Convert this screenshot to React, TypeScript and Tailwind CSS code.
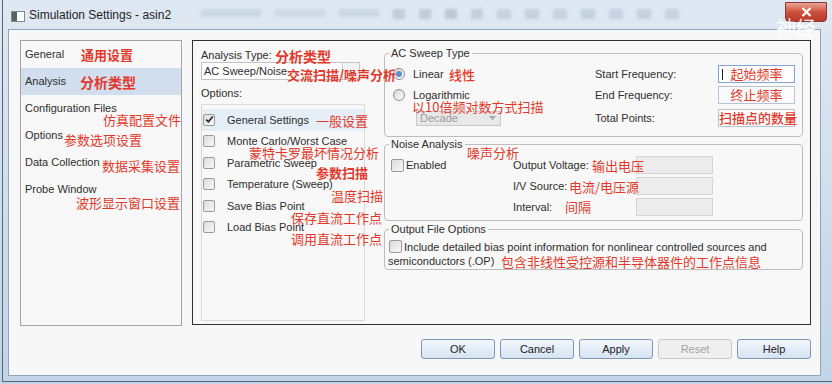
import React from "react";

const CN = "font-['Noto_Sans_CJK_SC',sans-serif] text-[#e2382b] leading-[18px] whitespace-nowrap absolute";

function Check({ checked = false, size = "w-[12px] h-[12px]" }: { checked?: boolean; size?: string }) {
  return (
    <span
      className={`${size} inline-flex shrink-0 items-center justify-center rounded-[2px] border border-[#9a9a9a] bg-gradient-to-br from-[#dcdcdc] to-[#f8f8f8] align-middle`}
    >
      {checked && (
        <svg width="9" height="9" viewBox="0 0 9 9">
          <path d="M1.2 4.6 L3.4 6.8 L7.8 1.6" fill="none" stroke="#222" strokeWidth="1.6" />
        </svg>
      )}
    </span>
  );
}

function Radio({ checked = false }: { checked?: boolean }) {
  return (
    <span className="w-[12px] h-[12px] shrink-0 rounded-full border border-[#8d8d8d] bg-gradient-to-br from-[#d8d8d8] to-[#fbfbfb] flex items-center justify-center">
      {checked && <span className="w-[6px] h-[6px] rounded-full bg-[#5b8fd0]" />}
    </span>
  );
}

function Btn({ label, disabled = false }: { label: string; disabled?: boolean }) {
  return (
    <div
      className={
        disabled
          ? "w-[74px] h-[20px] rounded-[3px] border border-[#c9c9c9] bg-[#efefef] text-[#a3a3a3] flex items-center justify-center"
          : "w-[74px] h-[20px] rounded-[3px] border border-[#7d97b5] bg-gradient-to-b from-[#f3f7fc] to-[#d5e3f2] text-[#222] flex items-center justify-center"
      }
    >
      {label}
    </div>
  );
}

export default function App() {
  const nav = ["General", "Analysis", "Configuration Files", "Options", "Data Collection", "Probe Window"];
  const opts = [
    "General Settings",
    "Monte Carlo/Worst Case",
    "Parametric Sweep",
    "Temperature (Sweep)",
    "Save Bias Point",
    "Load Bias Point",
  ];
  return (
    <div className="w-[832px] h-[384px] relative overflow-hidden bg-gradient-to-b from-[#dfe8f2] to-[#c2d4e7] font-['Liberation_Sans',Arial,sans-serif] text-[11px] text-[#2e2e2e]">
      <div className="ml-[2px] h-[382px] border-l border-b border-[#56677a] flex flex-col">
        {/* title bar */}
        <div className="h-[29px] flex items-start">
          <div className="mt-[11px] ml-[8px] w-[14px] h-[11px] border border-[#7a8a96] bg-white flex">
            <div className="w-[5px] h-full bg-[#4e6a5e]" />
          </div>
          <div className="mt-[7px] ml-[4px] text-[12px] text-[#1e1e1e] leading-[16px]">Simulation Settings - asin2</div>
          <div className="ml-[30px] mt-[9px] flex gap-[14px] opacity-30 blur-[1.5px]">
            <div className="w-[60px] h-[8px] bg-[#9fb2c6]" />
            <div className="w-[50px] h-[8px] bg-[#aab9c9]" />
            <div className="w-[40px] h-[8px] bg-[#a0b1c4]" />
            <div className="w-[12px] h-[10px] bg-[#7e8fa3]" />
            <div className="w-[12px] h-[10px] bg-[#7e8fa3]" />
            <div className="w-[12px] h-[10px] bg-[#6f8196]" />
            <div className="w-[12px] h-[10px] bg-[#8798ab]" />
            <div className="w-[14px] h-[10px] bg-[#8da0b5]" />
            <div className="w-[14px] h-[10px] bg-[#8da0b5]" />
            <div className="w-[14px] h-[10px] bg-[#93a6bb]" />
            <div className="w-[14px] h-[10px] bg-[#8da0b5]" />
            <div className="w-[14px] h-[10px] bg-[#93a6bb]" />
            <div className="w-[14px] h-[10px] bg-[#8da0b5]" />
            <div className="w-[14px] h-[10px] bg-[#93a6bb]" />
          </div>
          <div className="ml-auto mr-[5px] mt-[2px] w-[42px] h-[20px] rounded-b-[4px] border border-[#8a3a30] bg-gradient-to-b from-[#e9a596] via-[#cf4f3c] to-[#b73a28] flex items-center justify-center">
            <svg width="11" height="10" viewBox="0 0 11 10">
              <path d="M1.5 1 L9.5 9 M9.5 1 L1.5 9" stroke="#fff" strokeWidth="2.2" />
            </svg>
          </div>
        </div>

        {/* body */}
        <div className="ml-[5px] w-[813px] h-[347px] border border-[#8fa5bc] bg-[#f7f7f7] flex flex-col">
          <div className="flex items-start pt-[10px] pl-[11px] gap-[10px]">
            {/* left nav */}
            <div className="w-[162px] h-[286px] border border-[#a3a3a3] bg-[#f8f8f8] flex flex-col">
              {nav.map((n) => (
                <div
                  key={n}
                  className={`h-[27px] pl-[4px] flex items-center ${n === "Analysis" ? "bg-[#d1deed]" : ""}`}
                >
                  {n}
                </div>
              ))}
            </div>

            {/* right panel */}
            <div className="w-[619px] h-[285px] border border-[#333] bg-[#f8f8f8] flex items-start pl-[8px] pt-[5px] gap-[19px]">
              {/* left column */}
              <div className="w-[164px] pt-[2px] flex flex-col">
                <div className="h-[14px] leading-[14px]">Analysis Type:</div>
                <div className="w-[159px] h-[18px] border border-[#c4c4c4] bg-white flex">
                  <div className="flex-1 pl-[2px] flex items-center">AC Sweep/Noise</div>
                  <div className="w-[17px] border-l border-[#d0d0d0] bg-[#f2f2f2]" />
                </div>
                <div className="mt-[6px] h-[14px] leading-[14px]">Options:</div>
                <div className="mt-[4px] w-[164px] h-[217px] border border-[#d9d9d9] pt-[4px] flex flex-col">
                  {opts.map((o, i) => (
                    <div
                      key={o}
                      className={`h-[21.5px] flex items-center pl-[1px] gap-[12px] ${i === 0 ? "bg-[#e6eef8]" : ""}`}
                    >
                      <Check checked={i === 0} />
                      <span>{o}</span>
                    </div>
                  ))}
                </div>
              </div>

              {/* right column */}
              <div className="w-[419px] flex flex-col">
                {/* AC Sweep */}
                <fieldset className="border border-[#bdbdbd] rounded-[4px] pb-[9px]">
                  <legend className="ml-[4px] px-[2px] text-[11px] leading-[14px]">AC Sweep Type</legend>
                  <div className="mt-[5px] flex flex-col">
                    <div className="h-[18px] flex items-center">
                      <div className="w-[210px] pl-[8px] flex items-center">
                        <Radio checked />
                        <span className="ml-[8px]">Linear</span>
                      </div>
                      <div className="w-[123px]">Start Frequency:</div>
                      <div className="w-[77px] h-[18px] border border-[#7fa6d6] bg-white relative flex items-center justify-center">
                        <span className="absolute left-[3px] top-[3px] w-px h-[11px] bg-[#222]" />
                        <span className="font-['Noto_Sans_CJK_SC',sans-serif] text-[13px] text-[#e2382b] whitespace-nowrap leading-[16px]">起始频率</span>
                      </div>
                    </div>
                    <div className="mt-[3px] h-[18px] flex items-center">
                      <div className="w-[210px] pl-[8px] flex items-center">
                        <Radio />
                        <span className="ml-[8px]">Logarithmic</span>
                      </div>
                      <div className="w-[123px]">End Frequency:</div>
                      <div className="w-[77px] h-[18px] border border-[#b8c4d2] bg-[#fbfbfb] flex items-center justify-center">
                        <span className="font-['Noto_Sans_CJK_SC',sans-serif] text-[13px] text-[#e2382b] whitespace-nowrap leading-[16px]">终止频率</span>
                      </div>
                    </div>
                    <div className="mt-[5px] h-[18px] flex items-center">
                      <div className="w-[210px] pl-[31px] flex items-center">
                        <div className="w-[85px] h-[15px] border border-[#c9c9c9] bg-[#e8e8e8] flex text-[#9c9c9c]">
                          <div className="flex-1 pl-[3px] flex items-center">Decade</div>
                          <div className="w-[15px] flex items-center justify-center">
                            <svg width="7" height="4" viewBox="0 0 7 4">
                              <path d="M0 0 L7 0 L3.5 4 Z" fill="#a8a8a8" />
                            </svg>
                          </div>
                        </div>
                      </div>
                      <div className="w-[123px]">Total Points:</div>
                      <div className="w-[77px] h-[18px] border border-[#b8c4d2] bg-[#fbfbfb] flex items-center">
                        <span className="font-['Noto_Sans_CJK_SC',sans-serif] text-[13px] font-medium text-[#e2382b] whitespace-nowrap leading-[16px]">扫描点的数量</span>
                      </div>
                    </div>
                  </div>
                </fieldset>

                {/* Noise */}
                <fieldset className="border border-[#bdbdbd] rounded-[4px] pb-[4px]">
                  <legend className="ml-[4px] px-[2px] text-[11px] leading-[14px]">Noise Analysis</legend>
                  <div className="mt-[5px] flex items-start">
                    <div className="w-[128px] pl-[6px] h-[18px] flex items-center gap-[2px]">
                      <Check size="w-[13px] h-[13px]" />
                      <span>Enabled</span>
                    </div>
                    <div className="flex flex-col gap-[3px]">
                      {["Output Voltage:", "I/V Source:", "Interval:"].map((l) => (
                        <div key={l} className="h-[18px] flex items-center">
                          <div className="w-[123px]">{l}</div>
                          <div className="w-[77px] h-[18px] border border-[#d4d4d4] bg-[#ececec]" />
                        </div>
                      ))}
                    </div>
                  </div>
                </fieldset>

                {/* Output File */}
                <fieldset className="mt-[1px] border border-[#bdbdbd] rounded-[4px] pb-[1px]">
                  <legend className="ml-[4px] px-[2px] text-[11px] leading-[14px]">Output File Options</legend>
                  <div className="mt-[4px] pl-[3px] leading-[14px] whitespace-nowrap">
                    <span className="ml-[1px] mr-[2px] inline-flex align-[-2px]">
                      <Check size="w-[13px] h-[13px]" />
                    </span>
                    Include detailed bias point information for nonlinear controlled sources and
                    <br />
                    semiconductors (.OP)
                  </div>
                </fieldset>
              </div>
            </div>
          </div>

          {/* buttons */}
          <div className="mt-[13px] pr-[9px] flex justify-end gap-[5px]">
            <Btn label="OK" />
            <Btn label="Cancel" />
            <Btn label="Apply" />
            <Btn label="Reset" disabled />
            <Btn label="Help" />
          </div>
        </div>
      </div>

      {/* annotations overlay */}
      <span className={`${CN} left-[81px] top-[46px] text-[13px] font-bold`}>通用设置</span>
      <span className={`${CN} left-[80px] top-[73px] text-[14px] font-bold`}>分析类型</span>
      <span className={`${CN} left-[103px] top-[111px] text-[13px]`}>仿真配置文件</span>
      <span className={`${CN} left-[64px] top-[131px] text-[13px]`}>参数选项设置</span>
      <span className={`${CN} left-[102px] top-[157px] text-[13px]`}>数据采集设置</span>
      <span className={`${CN} left-[76px] top-[194px] text-[13px]`}>波形显示窗口设置</span>
      <span className={`${CN} left-[275px] top-[47px] text-[14px] font-bold`}>分析类型</span>
      <span className={`${CN} left-[287px] top-[66px] text-[13px] font-bold`}>交流扫描/噪声分析</span>
      <span className={`${CN} left-[316px] top-[112px] text-[13px]`}>一般设置</span>
      <span className={`${CN} left-[249px] top-[144px] text-[13px]`}>蒙特卡罗最坏情况分析</span>
      <span className={`${CN} left-[316px] top-[164px] text-[13px] font-bold`}>参数扫描</span>
      <span className={`${CN} left-[331px] top-[187px] text-[13px]`}>温度扫描</span>
      <span className={`${CN} left-[291px] top-[209px] text-[13px]`}>保存直流工作点</span>
      <span className={`${CN} left-[291px] top-[230px] text-[13px]`}>调用直流工作点</span>
      <span className={`${CN} left-[449px] top-[66px] text-[13px] font-medium`}>线性</span>
      <span className={`${CN} left-[412px] top-[98px] text-[13px]`}>以10倍频对数方式扫描</span>
      <span className={`${CN} left-[467px] top-[144px] text-[13px]`}>噪声分析</span>
      <span className={`${CN} left-[592px] top-[157px] text-[13px]`}>输出电压</span>
      <span className={`${CN} left-[569px] top-[178px] text-[13px]`}>电流/电压源</span>
      <span className={`${CN} left-[565px] top-[198px] text-[13px]`}>间隔</span>
      <span className={`${CN} left-[501px] top-[253px] text-[13px]`}>包含非线性受控源和半导体器件的工作点信息</span>

      <span className="absolute left-[776px] top-[16px] text-[20px] leading-[24px] text-white/90 font-['Noto_Sans_CJK_SC',sans-serif] whitespace-nowrap">神经</span>
    </div>
  );
}
